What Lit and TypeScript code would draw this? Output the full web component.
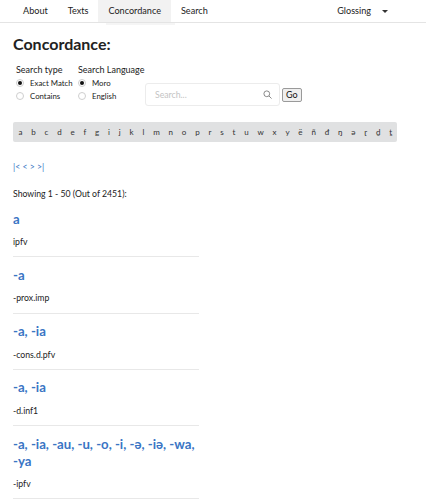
import { LitElement, html, css } from "lit";
import { customElement } from "lit/decorators.js";

const LETTERS = "a b c d e f g i j k l m n o p r s t u w x y ë ñ đ ŋ ə ɽ ḏ ṯ".split(" ");
const ENTRIES = [
  ["a", "ipfv"],
  ["-a", "-prox.imp"],
  ["-a, -ia", "-cons.d.pfv"],
  ["-a, -ia", "-d.inf1"],
  ["-a, -ia, -au, -u, -o, -i, -ə, -iə, -wa, -ya", "-ipfv"],
];

@customElement("app-root")
export class AppRoot extends LitElement {
  static styles = css`
    :host { display: block; width: 426px; height: 500px; overflow: hidden; background: #fff; color: #222; font-family: Lato, "Noto Sans", sans-serif; font-size: 8.7px; line-height: 14px; }
    nav { display: flex; height: 22px; border-bottom: 1px solid #e4e4e4; padding-left: 13px; font-size: 9.1px; }
    .tab { display: flex; align-items: center; padding: 0 10px; height: 22px; }
    .tab.on { background: #f2f2f2; position: relative; }
    .tab.on::after { content: ""; position: absolute; left: 8px; right: -4px; top: 23px; height: 2px; background: #f5f5f5; }
    .gloss { margin-left: auto; margin-right: 38px; display: flex; align-items: center; gap: 11px; }
    .caret { width: 0; height: 0; border: 3px solid transparent; border-top: 3px solid #333; border-bottom: 0; }
    main { padding: 0 13px; }
    h1 { margin: 11px 0 0; font-size: 16px; line-height: 20px; font-weight: 700; color: #222; }
    .search { display: flex; margin-top: 9px; padding-left: 3px; align-items: flex-start; }
    .g1 { width: 62px; flex: none; }
    .g2 { width: 67px; flex: none; }
    .legend { line-height: 13px; font-size: 9px; white-space: nowrap; }
    .opt { display: flex; align-items: center; height: 13px; font-size: 7.8px; gap: 6px; white-space: nowrap; }
    .radio { width: 8px; height: 8px; border: 1px solid #cfcfcf; border-radius: 50%; box-sizing: border-box; display: flex; align-items: center; justify-content: center; flex: none; }
    .radio.on i { width: 4px; height: 4px; border-radius: 50%; background: #111; display: block; }
    .box { width: 135px; height: 23px; box-sizing: border-box; border: 1px solid #ececec; border-radius: 3px; margin-top: 20px; display: flex; align-items: center; padding: 0 7px 0 9px; justify-content: space-between; color: #c4c4c4; flex: none; }
    .go { height: 14px; padding: 0 3px; margin: 25px 0 0 2px; border: 1px solid #9a9a9a; border-radius: 2px; background: #efefef; font-family: inherit; font-size: 9px; line-height: 12px; color: #111; }
    .letters { display: flex; align-items: center; height: 20px; margin-top: 16px; width: 384px; background: #e0e1e2; border-radius: 2px; padding-left: 1px; box-sizing: border-box; font-size: 8px; color: #333; }
    .letters span { padding: 0 4.42px; }
    .pager { margin-top: 18px; color: #3a75c4; line-height: 14px; height: 14px; }
    .showing { margin-top: 13px; line-height: 14px; }
    .entry { width: 186px; border-bottom: 1px solid #e8e8e8; padding: 9.5px 0 7.25px; }
    .entry h2 { margin: 0; font-size: 13.2px; line-height: 17px; font-weight: 700; color: #3a75c4; }
    .entry p { margin: 7.5px 0 0; font-size: 8.7px; line-height: 14px; color: #222; }
  `;
  render() {
    return html`
      <nav>
        <div class="tab">About</div><div class="tab">Texts</div><div class="tab on">Concordance</div><div class="tab">Search</div>
        <div class="gloss">Glossing <span class="caret"></span></div>
      </nav>
      <main>
        <h1>Concordance:</h1>
        <div class="search">
          <div class="g1">
            <div class="legend">Search type</div>
            <div class="opt"><span class="radio on"><i></i></span>Exact Match</div>
            <div class="opt"><span class="radio"></span>Contains</div>
          </div>
          <div class="g2">
            <div class="legend">Search Language</div>
            <div class="opt"><span class="radio on"><i></i></span>Moro</div>
            <div class="opt"><span class="radio"></span>English</div>
          </div>
          <div class="box"><span>Search...</span>
            <svg width="9" height="9" viewBox="0 0 10 10" fill="none" stroke="#888" stroke-width="1.1"><circle cx="4.2" cy="4.2" r="3.2"/><path d="M6.6 6.6L9.5 9.5"/></svg>
          </div>
          <button class="go">Go</button>
        </div>
        <div class="letters">${LETTERS.map((l) => html`<span>${l}</span>`)}</div>
        <div class="pager">|&lt; &lt; &gt; &gt;|</div>
        <div class="showing">Showing 1 - 50 (Out of 2451):</div>
        ${ENTRIES.map(([t, g]) => html`<div class="entry"><h2>${t}</h2><p>${g}</p></div>`)}
      </main>
    `;
  }
}
